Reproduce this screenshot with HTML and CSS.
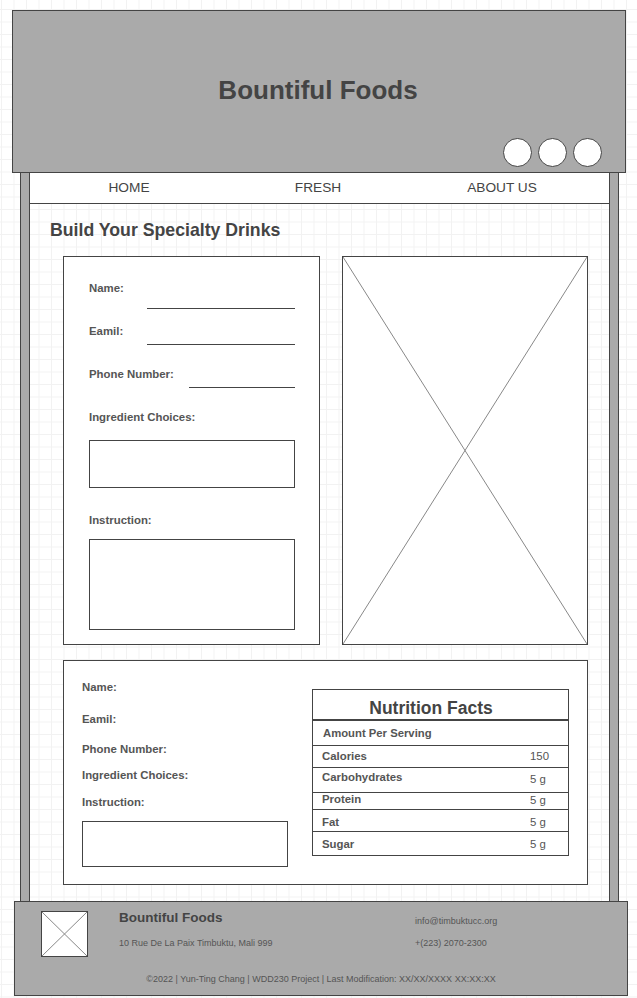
FILE: index.html
```html
<!DOCTYPE html>
<html>
<head>
    <title>Bountiful Foods</title>
    <link rel="stylesheet" href="styles.css">
</head>
<body>
    <header class="site-header">
        <h1>Bountiful Foods</h1>
        <div class="social">
            <span class="dot"></span>
            <span class="dot"></span>
            <span class="dot"></span>
        </div>
    </header>

    <div class="frame">
        <div class="inner">
            <nav class="menu">
                <a>HOME</a>
                <a>FRESH</a>
                <a>ABOUT US</a>
            </nav>

            <h2 class="page-title">Build Your Specialty Drinks</h2>

            <div class="order-row">
                <form class="order-form">
                    <div class="field">
                        <label>Name:</label>
                        <span class="line line-name"></span>
                    </div>
                    <div class="field">
                        <label>Eamil:</label>
                        <span class="line"></span>
                    </div>
                    <div class="field">
                        <label>Phone Number:</label>
                        <span class="line line-phone"></span>
                    </div>
                    <label class="block-label">Ingredient Choices:</label>
                    <div class="box box-ingredients"></div>
                    <label class="block-label label-instruction">Instruction:</label>
                    <div class="box box-instruction"></div>
                </form>

                <div class="photo">
                    <svg viewBox="0 0 100 100" preserveAspectRatio="none">
                        <line x1="0" y1="0" x2="100" y2="100" />
                        <line x1="100" y1="0" x2="0" y2="100" />
                    </svg>
                </div>
            </div>

            <div class="summary">
                <div class="summary-fields">
                    <label>Name:</label>
                    <label>Eamil:</label>
                    <label>Phone Number:</label>
                    <label>Ingredient Choices:</label>
                    <label>Instruction:</label>
                    <div class="box box-summary"></div>
                </div>

                <div class="nutrition">
                    <div class="nf-title">Nutrition Facts</div>
                    <div class="nf-amount">Amount Per Serving</div>
                    <div class="nf-row nf-calories"><span>Calories</span><span class="val">150</span></div>
                    <div class="nf-row nf-carbs"><span>Carbohydrates</span><span class="val">5 g</span></div>
                    <div class="nf-row nf-protein"><span>Protein</span><span class="val">5 g</span></div>
                    <div class="nf-row nf-fat"><span>Fat</span><span class="val">5 g</span></div>
                    <div class="nf-row nf-sugar"><span>Sugar</span><span class="val">5 g</span></div>
                </div>
            </div>
        </div>
    </div>

    <footer class="site-footer">
        <div class="footer-top">
            <div class="footer-logo">
                <svg viewBox="0 0 100 100" preserveAspectRatio="none">
                    <line x1="0" y1="0" x2="100" y2="100" />
                    <line x1="100" y1="0" x2="0" y2="100" />
                </svg>
            </div>
            <div class="footer-info">
                <div class="footer-name">Bountiful Foods</div>
                <div class="footer-small footer-address">10 Rue De La Paix Timbuktu, Mali 999</div>
            </div>
            <div class="footer-contact">
                <div class="footer-small">info@timbuktucc.org</div>
                <div class="footer-small footer-phone">+(223) 2070-2300</div>
            </div>
        </div>
        <div class="footer-small copyright">&copy;2022 | Yun-Ting Chang | WDD230 Project | Last Modification: XX/XX/XXXX XX:XX:XX</div>
    </footer>
</body>
</html>
```

FILE: styles.css
```css
body {
    margin: 0;
    padding-top: 10px;
    font-family: "Liberation Sans", Arial, sans-serif;
    color: #444;
}

body,
.inner {
    background-color: #fff;
    background-image:
        linear-gradient(#f2f2f2 1px, transparent 1px),
        linear-gradient(90deg, #f2f2f2 1px, transparent 1px);
    background-size: 12.5px 12.5px;
    background-position: 1px 9px;
    background-attachment: fixed;
}

/* header */
.site-header {
    margin-left: 12px;
    width: 614px;
    height: 163px;
    box-sizing: border-box;
    border: 1px solid #444;
    background: #aaa;
    display: flex;
    flex-direction: column;
}

.site-header h1 {
    margin: 64px 0 0;
    padding-right: 2px;
    font-size: 26px;
    line-height: 30px;
    text-align: center;
    color: #444;
}

.social {
    margin-top: auto;
    align-self: flex-end;
    display: flex;
    gap: 6px;
    padding: 0 23px 5px 0;
}

.dot {
    width: 29px;
    height: 29px;
    box-sizing: border-box;
    border: 1px solid #444;
    border-radius: 50%;
    background: #fff;
}

/* frame with the grey side bars */
.frame {
    margin-left: 20px;
    width: 599px;
    box-sizing: border-box;
    border-left: 1px solid #444;
    border-right: 1px solid #444;
    background: #aaa;
    padding: 0 8px 0;
}

.inner {
    border-left: 1px solid #444;
    border-right: 1px solid #444;
    padding-bottom: 16px;
}

.menu {
    display: grid;
    grid-template-columns: 198px 180px 188px;
    height: 30px;
    line-height: 30px;
    background: #fff;
    border-bottom: 1px solid #444;
    font-size: 13.7px;
    text-align: center;
}

.page-title {
    margin: 16px 0 0 20px;
    font-size: 17.7px;
    line-height: 20px;
    color: #444;
}

label {
    display: block;
    font-size: 11.4px;
    line-height: 14px;
    font-weight: bold;
    color: #555;
}

.box {
    background: #fff;
    border: 1px solid #444;
    box-sizing: border-box;
}

/* order form + picture */
.order-row {
    display: flex;
    gap: 22px;
    margin: 16px 0 0 33px;
}

.order-form {
    width: 257px;
    box-sizing: border-box;
    margin: 0;
    padding: 24px 24px 14px 25px;
    background: #fff;
    border: 1px solid #444;
}

.field {
    display: flex;
    height: 43px;
}

.line {
    margin-left: auto;
    width: 148px;
    height: 20px;
    border-bottom: 1px solid #444;
}

.line-name {
    height: 27px;
}

.line-phone {
    width: 106px;
}

.box-ingredients {
    margin-top: 16px;
    height: 48px;
}

.label-instruction {
    margin-top: 25px;
}

.box-instruction {
    margin-top: 12px;
    height: 91px;
}

.photo {
    width: 246px;
    box-sizing: border-box;
    background: #fff;
    border: 1px solid #444;
}

.photo svg,
.footer-logo svg {
    display: block;
    width: 100%;
    height: 100%;
}

.photo line,
.footer-logo line {
    stroke: #888;
    stroke-width: 1;
    vector-effect: non-scaling-stroke;
}

/* summary */
.summary {
    display: flex;
    align-items: flex-start;
    margin: 15px 0 0 33px;
    width: 525px;
    height: 225px;
    box-sizing: border-box;
    background: #fff;
    border: 1px solid #444;
}

.summary-fields {
    width: 206px;
    padding: 19px 0 0 18px;
}

.summary-fields label {
    margin-bottom: 12px;
}

.summary-fields label:nth-child(1) {
    margin-bottom: 18px;
}

.summary-fields label:nth-child(2) {
    margin-bottom: 16px;
}

.summary-fields label:nth-child(4) {
    margin-bottom: 13px;
}

.box-summary {
    height: 46px;
}

.nutrition {
    margin: 28px 0 0 24px;
    width: 257px;
    box-sizing: border-box;
    border: 1px solid #444;
    font-size: 11.4px;
    color: #555;
}

.nf-title {
    height: 31px;
    box-sizing: border-box;
    padding: 7px 19px 0 0;
    line-height: 22px;
    font-size: 17.5px;
    font-weight: bold;
    text-align: center;
    color: #444;
    border-bottom: 2px solid #444;
}

.nf-amount {
    height: 18px;
    padding: 6px 0 0 10px;
    line-height: 12px;
    font-size: 11.3px;
    font-weight: bold;
    border-bottom: 1px solid #444;
}

.nf-row {
    display: flex;
    justify-content: space-between;
    box-sizing: border-box;
    padding-left: 9px;
    line-height: 12px;
    font-weight: bold;
    border-bottom: 1px solid #444;
}

.nf-row:last-child {
    border-bottom: none;
}

.nf-row .val {
    width: 38px;
    font-weight: normal;
}

.nf-calories { height: 22px; padding-top: 4px; }
.nf-carbs { height: 25px; padding-top: 3px; }
.nf-protein { height: 17px; padding-top: 0; }
.nf-fat { height: 22px; padding-top: 6px; }
.nf-sugar { height: 23px; padding-top: 6px; }

.nf-carbs .val { padding-top: 2px; }
.nf-protein .val { padding-top: 1px; }

/* footer */
.site-footer {
    margin-left: 14px;
    width: 614px;
    height: 95px;
    box-sizing: border-box;
    border: 1px solid #444;
    background: #aaa;
    padding-left: 26px;
}

.footer-top {
    display: flex;
    align-items: flex-start;
}

.footer-logo {
    margin-top: 9px;
    width: 47px;
    height: 46px;
    box-sizing: border-box;
    background: #fff;
    border: 1px solid #444;
}

.footer-info {
    margin: 8px 0 0 31px;
    width: 296px;
}

.footer-name {
    font-size: 13.5px;
    line-height: 16px;
    font-weight: bold;
    color: #444;
}

.footer-small {
    font-size: 9px;
    line-height: 11px;
    color: #555;
}

.footer-address {
    margin-top: 12px;
}

.footer-contact {
    margin-top: 14px;
}

.footer-phone {
    margin-top: 11px;
}

.copyright {
    margin: 17px 0 0 -26px;
    text-align: center;
}
```
